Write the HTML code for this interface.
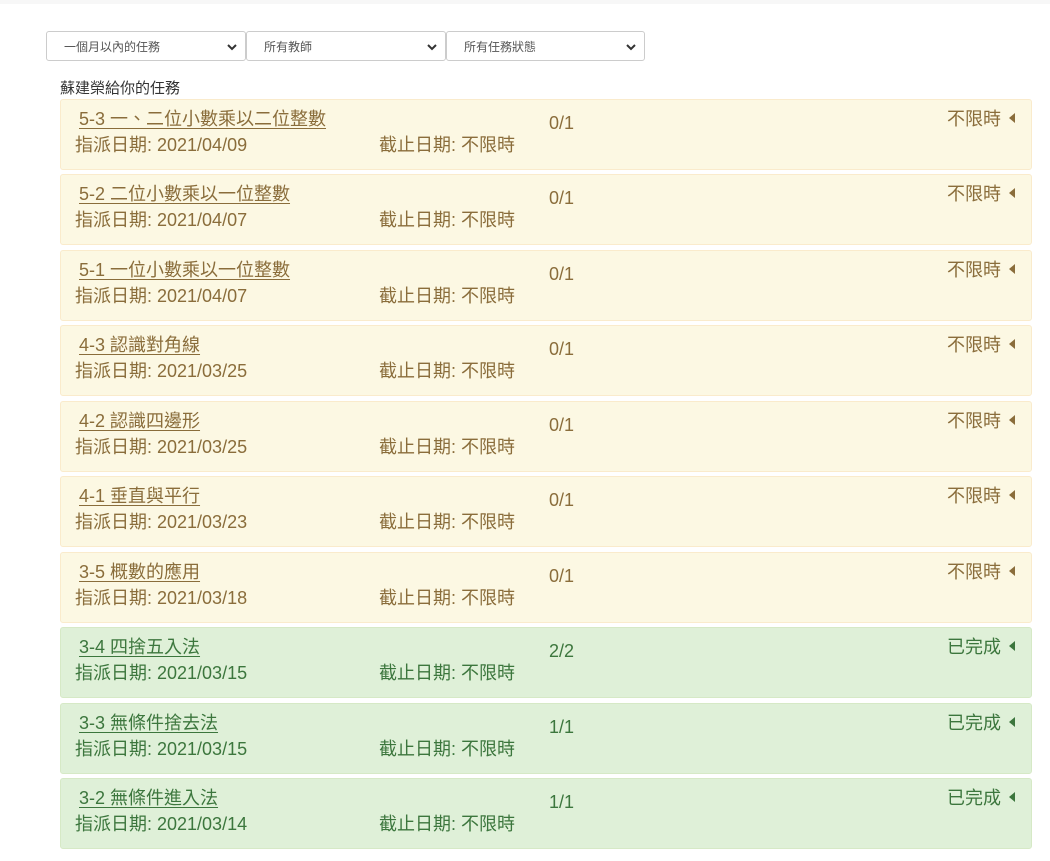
<!DOCTYPE html>
<html><head><meta charset="utf-8"><style>
body{margin:0;background:#fff;font-family:"Liberation Sans","Noto Sans CJK TC",sans-serif;width:1050px;height:861px;overflow:hidden;position:relative}
.top{position:absolute;left:0;top:0;width:1050px;height:4px;background:#f7f7f7}
.sel{position:absolute;top:31px;height:30px;border:1px solid #ccc;border-radius:3px;box-sizing:border-box;font-size:12px;color:#555;padding:6px 0 0 17px;background:#fff}
.sel svg{position:absolute;right:8px;top:11px}
h4{position:absolute;left:60px;top:77px;margin:0;font-size:15px;font-weight:normal;color:#333}
.b{position:absolute;left:60px;width:972px;height:71px;box-sizing:border-box;border:1px solid;border-radius:3px;font-size:18px}
.w{background:#fcf8e3;border-color:#faebcc;color:#8a6d3b}
.s{background:#dff0d8;border-color:#d6e9c6;color:#3c763d}
.t{position:absolute;left:18px;top:5px;text-decoration:underline;text-underline-offset:3px}
.d{position:absolute;left:14px;top:31px}
.e{position:absolute;left:318px;top:31px}
.c{position:absolute;left:488px;top:13px}
.st{position:absolute;right:30px;top:5px}
.ar{position:absolute;right:16px;top:13px;width:0;height:0;border-top:5px solid transparent;border-bottom:5px solid transparent;border-right:6px solid currentColor}
</style></head><body>
<div class="top"></div>
<div class="sel" style="left:46px;width:200px">一個月以內的任務<svg width="10" height="8"><path d="M1 2l4 4 4-4" stroke="#333" stroke-width="2" fill="none"/></svg></div>
<div class="sel" style="left:246px;width:200px">所有教師<svg width="10" height="8"><path d="M1 2l4 4 4-4" stroke="#333" stroke-width="2" fill="none"/></svg></div>
<div class="sel" style="left:446px;width:199px">所有任務狀態<svg width="10" height="8"><path d="M1 2l4 4 4-4" stroke="#333" stroke-width="2" fill="none"/></svg></div>
<h4>蘇建榮給你的任務</h4>

<div class="b w" style="top:99px"><span class="t">5-3 一、二位小數乘以二位整數</span><span class="d">指派日期: 2021/04/09</span><span class="e">截止日期: 不限時</span><span class="c">0/1</span><span class="st">不限時</span><span class="ar"></span></div>
<div class="b w" style="top:174px"><span class="t">5-2 二位小數乘以一位整數</span><span class="d">指派日期: 2021/04/07</span><span class="e">截止日期: 不限時</span><span class="c">0/1</span><span class="st">不限時</span><span class="ar"></span></div>
<div class="b w" style="top:250px"><span class="t">5-1 一位小數乘以一位整數</span><span class="d">指派日期: 2021/04/07</span><span class="e">截止日期: 不限時</span><span class="c">0/1</span><span class="st">不限時</span><span class="ar"></span></div>
<div class="b w" style="top:325px"><span class="t">4-3 認識對角線</span><span class="d">指派日期: 2021/03/25</span><span class="e">截止日期: 不限時</span><span class="c">0/1</span><span class="st">不限時</span><span class="ar"></span></div>
<div class="b w" style="top:401px"><span class="t">4-2 認識四邊形</span><span class="d">指派日期: 2021/03/25</span><span class="e">截止日期: 不限時</span><span class="c">0/1</span><span class="st">不限時</span><span class="ar"></span></div>
<div class="b w" style="top:476px"><span class="t">4-1 垂直與平行</span><span class="d">指派日期: 2021/03/23</span><span class="e">截止日期: 不限時</span><span class="c">0/1</span><span class="st">不限時</span><span class="ar"></span></div>
<div class="b w" style="top:552px"><span class="t">3-5 概數的應用</span><span class="d">指派日期: 2021/03/18</span><span class="e">截止日期: 不限時</span><span class="c">0/1</span><span class="st">不限時</span><span class="ar"></span></div>
<div class="b s" style="top:627px"><span class="t">3-4 四捨五入法</span><span class="d">指派日期: 2021/03/15</span><span class="e">截止日期: 不限時</span><span class="c">2/2</span><span class="st">已完成</span><span class="ar"></span></div>
<div class="b s" style="top:703px"><span class="t">3-3 無條件捨去法</span><span class="d">指派日期: 2021/03/15</span><span class="e">截止日期: 不限時</span><span class="c">1/1</span><span class="st">已完成</span><span class="ar"></span></div>
<div class="b s" style="top:778px"><span class="t">3-2 無條件進入法</span><span class="d">指派日期: 2021/03/14</span><span class="e">截止日期: 不限時</span><span class="c">1/1</span><span class="st">已完成</span><span class="ar"></span></div>
</body></html>
